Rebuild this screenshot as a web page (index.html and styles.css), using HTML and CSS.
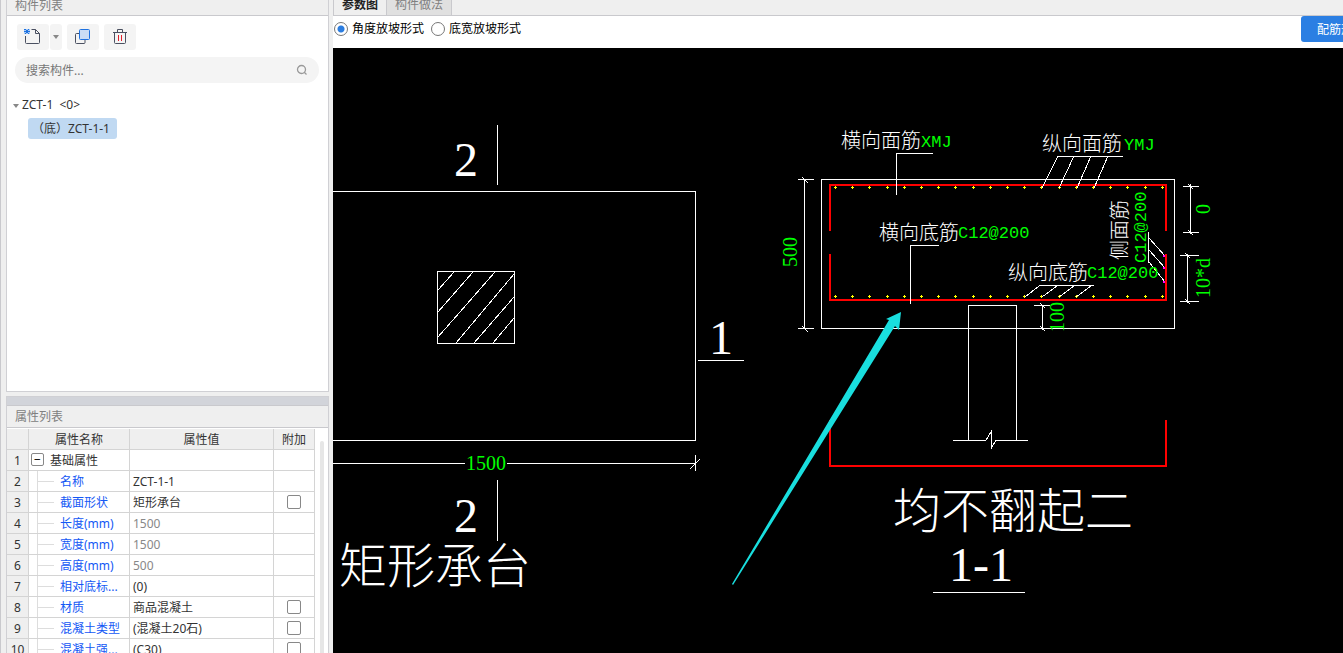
FILE: index.html
```
<!DOCTYPE html>
<html lang="zh-CN">
<head>
    <meta charset="UTF-8">
    <title>构件列表</title>
    <link rel="stylesheet" href="styles.css">
</head>
<body>
<div class="app">
    <aside class="side">
        <section class="panel list-panel">
            <h2 class="panel-title clipped">构件列表</h2>
            <div class="toolbar">
                <div class="split">
                    <button class="tool" aria-label="新建">
                        <svg width="18" height="18" viewBox="0 0 18 18" fill="none">
                            <path d="M1.500 8v6.500q0 1 1 1h12q1 0 1-1V5.500l-4-4H7.500M11.500 1.500v4h4" stroke="#4a5061"/>
                            <path d="M0 1h6v5H0z" fill="#a9cbf5"/>
                            <path d="M1 1h1v1H1zM4 1h1v1H4zM2 2h2v3H2zM0 3h2v1H0zM4 3h2v1H4zM1 5h1v1H1zM4 5h1v1H4zM0 1h1v1H0z" fill="#1f72e0"/>
                        </svg>
                    </button>
                    <button class="tool drop" aria-label="更多"><span class="caret"></span></button>
                </div>
                <button class="tool" aria-label="复制">
                    <svg width="18" height="18" viewBox="0 0 18 18" fill="none">
                        <path d="M5 5.500H2.500q-1 0-1 1v8q0 1 1 1H10q1 0 1-1V12" stroke="#4a5061"/>
                        <rect x="5.500" y="1.500" width="10" height="10" rx="1" fill="#c9dcf5" stroke="#1f72e0"/>
                    </svg>
                </button>
                <button class="tool" aria-label="删除">
                    <svg width="18" height="18" viewBox="0 0 18 18" fill="none">
                        <path d="M2 4.500h14M6.500 4V1.500h5V4M3.500 5v9.500q0 1 1 1h9q1 0 1-1V5" stroke="#4a5061"/>
                        <path d="M7.500 7v6M10.500 7v6" stroke="#e0202c"/>
                    </svg>
                </button>
            </div>
            <label class="search">
                <input type="text" placeholder="搜索构件..." aria-label="搜索构件">
                <svg width="12" height="12" viewBox="0 0 12 12" fill="none" stroke="#999" stroke-width="1.300">
                    <circle cx="5.500" cy="5.500" r="4"/>
                    <path d="M8 8l2.500 2.500"/>
                </svg>
            </label>
            <ul class="tree">
                <li><span class="caret"></span>ZCT-1&nbsp; &lt;0&gt;
                    <ul><li class="selected">（底）ZCT-1-1</li></ul>
                </li>
            </ul>
        </section>
        <section class="panel prop-panel">
            <div class="splitter"></div>
            <h2 class="panel-title">属性列表</h2>
            <div class="prop-body">
                <table class="props">
                    <thead>
                    <tr><th class="num"></th><th class="name">属性名称</th><th class="value">属性值</th><th class="extra">附加</th></tr>
                    </thead>
                    <tbody>
                    <tr class="group"><th>1</th><td><button class="fold" aria-label="折叠">−</button>基础属性</td><td></td><td></td></tr>
                    <tr><th>2</th><td>名称</td><td>ZCT-1-1</td><td></td></tr>
                    <tr><th>3</th><td>截面形状</td><td>矩形承台</td><td><input type="checkbox" aria-label="截面形状附加"></td></tr>
                    <tr class="dim"><th>4</th><td>长度(mm)</td><td>1500</td><td></td></tr>
                    <tr class="dim"><th>5</th><td>宽度(mm)</td><td>1500</td><td></td></tr>
                    <tr class="dim"><th>6</th><td>高度(mm)</td><td>500</td><td></td></tr>
                    <tr><th>7</th><td>相对底标...</td><td>(0)</td><td></td></tr>
                    <tr><th>8</th><td>材质</td><td>商品混凝土</td><td><input type="checkbox" aria-label="材质附加"></td></tr>
                    <tr><th>9</th><td>混凝土类型</td><td>(混凝土20石)</td><td><input type="checkbox" aria-label="混凝土类型附加"></td></tr>
                    <tr><th>10</th><td>混凝土强...</td><td>(C30)</td><td><input type="checkbox" aria-label="混凝土强度附加"></td></tr>
                    </tbody>
                </table>
                <div class="scrollbar"></div>
            </div>
        </section>
    </aside>
    <main class="main">
        <nav class="tabs">
            <button class="tab active">参数图</button>
            <button class="tab">构件做法</button>
        </nav>
        <div class="options">
            <label><input type="radio" name="slope" checked>角度放坡形式</label>
            <label><input type="radio" name="slope">底宽放坡形式</label>
            <button class="primary">配筋形式</button>
        </div>
        <div class="canvas">
            <svg class="drawing" viewBox="333 48 1010 605" preserveAspectRatio="xMinYMin slice">
                <!-- plan view -->
                <g class="line">
                    <path d="M333 191.500H695.500V440.500H333M497.500 125v60M497.500 480v61M698 360.500h46"/>
                    <path d="M333 463.500h132M507 463.500h189M695.500 455v16"/>
                    <rect x="437.500" y="271.500" width="77" height="72"/>
                    <path d="M438 290l16-18M438 312l35-40M438 337l57-65M456 343l58-69M474 343l40-46M493 343l21-25M690 469l10-10"/>
                </g>
                <text class="title" x="454" y="176">2</text>
                <text class="title" x="454" y="532">2</text>
                <text class="title" x="709" y="354">1</text>
                <text class="title" x="339" y="583">矩形承台</text>
                <text class="dim-text" x="466" y="470">1500</text>

                <!-- section 1-1 -->
                <g class="line">
                    <rect x="821.500" y="179.500" width="353" height="149"/>
                    <path d="M968.500 440V305.500H1016.500V440M953 440.500h33M996 440.500h32"/>
                    <path d="M986 440l5-8v17l5-9"/>
                    <path d="M798 179.500h16M798 328.500h16M804.500 179v150"/>
                    <path d="M1183 186.500h16M1183 232.500h16M1190.500 184v50M1180 255.500h19M1180 301.500h19M1187.500 254v49"/>
                    <path d="M1034 305.500h16M1042.500 305v25"/>
                    <path d="M802 177l6 6M802 326l6 6M1188 184l5 5M1188 230l5 5M1185 253l5 5M1185 299l5 5M1040 303l5 5M1040 326l5 5"/>
                    <path d="M933 592.500h92"/>
                </g>
                <g class="rebar">
                    <path d="M830 231V185H1166V231M830 254V300H1166V254M830 420V466H1166V420"/>
                </g>
                <path class="dots" d="M834 187.500H1165M834 296.500H1165"/>
                <path class="dots-tall" d="M835 187.500H1165M835 296.500H1165"/>
                <g class="line">
                    <path d="M896.500 195V153.500h36M910.500 304V245.500h28M1123 156.500h-65M1094 285.500h-55M1148.500 232v31"/>
                    <path d="M1058 156l-16 32M1074 156l-15 32M1091 156l-14 32M1108 156l-14 32M1039 286l-14 11M1057 286l-15 11M1074 286l-15 11M1091 286l-15 11M1149 238l16 18M1149 250l16 18M1149 262l16 20"/>
                </g>
                <path d="M1163 255h2v2h-2zM1163 267h2v2h-2zM1163 281h2v2h-2z" fill="#f0f"/>
                <text class="note" x="841" y="148">横向面筋</text>
                <text class="code" x="921" y="147">XMJ</text>
                <text class="note" x="1042" y="151">纵向面筋</text>
                <text class="code" x="1124" y="150">YMJ</text>
                <text class="note" x="879" y="240">横向底筋</text>
                <text class="code" x="958" y="238">C12@200</text>
                <text class="note" x="1008" y="280">纵向底筋</text>
                <text class="code" x="1087" y="278">C12@200</text>
                <text class="note" transform="translate(1127 260) rotate(-90)">侧面筋</text>
                <text class="code" transform="translate(1146 263) rotate(-90)">C12@200</text>
                <text class="dim-text" transform="translate(797 267) rotate(-90)">500</text>
                <text class="dim-text" transform="translate(1210 214) rotate(-90)">0</text>
                <text class="dim-text" transform="translate(1210 298) rotate(-90)">10*d</text>
                <text class="dim-text" transform="translate(1064 332) rotate(-90)">100</text>
                <text class="title" x="893" y="528">均不翻起二</text>
                <text class="title" x="949" y="581">1-1</text>
                <path d="M732 584L889 320L886 319L901 312L899 330L895 326L733 585z" fill="#19dede"/>
            </svg>
        </div>
    </main>
</div>
</body>
</html>
```

FILE: styles.css
```
* {
    box-sizing: border-box;
}

body {
    margin: 0;
    background: #efefef;
    color: #333;
    font: 12px/20px "Noto Sans", "Noto Sans CJK SC", sans-serif;
}

button, input {
    font: inherit;
    margin: 0;
}

button {
    border: none;
    padding: 0;
}

.app {
    display: flex;
    height: 100vh;
    overflow: hidden;
}

.side {
    display: flex;
    flex-direction: column;
    gap: 4px;
    width: 333px;
    flex: none;
    padding: 0 4px 0 5px;
    border-left: 1px solid #c9c9cd;
}

.panel {
    border: 1px solid #d0d0d4;
    overflow: hidden;
}

.list-panel {
    flex: none;
    height: 392px;
    border-top: none;
    background: #fff;
}

.panel-title {
    display: flex;
    align-items: flex-end;
    height: 22px;
    margin: 0;
    padding-left: 8px;
    border-bottom: 1px solid #c9c9cd;
    background: #efefef;
    color: #808080;
    font-size: 12px;
    font-weight: normal;
}

.panel-title.clipped {
    height: 16px;
    line-height: 18px;
}

.toolbar {
    display: flex;
    gap: 5px;
    padding: 8px 10px 7px;
}

.split {
    display: flex;
    gap: 1px;
}

.tool {
    display: flex;
    align-items: center;
    justify-content: center;
    width: 32px;
    height: 26px;
    border-radius: 3px;
    background: #f4f4f4;
}

.tool.drop {
    width: 12px;
}

.caret {
    display: inline-block;
    border: 3px solid transparent;
    border-top: 4px solid #888;
    border-bottom: none;
}

.search {
    display: flex;
    align-items: center;
    height: 26px;
    margin: 0 9px 0 8px;
    padding: 0 11px;
    border-radius: 13px;
    background: #f4f4f4;
}

.search input {
    flex: 1;
    min-width: 0;
    padding: 2px 0 0;
    border: none;
    outline: none;
    background: none;
}

.search input::placeholder {
    color: #777;
}

.tree {
    margin: 12px 0 0;
    padding: 0 6px;
    list-style: none;
}

.tree .caret {
    margin-right: 3px;
    vertical-align: middle;
}

.tree ul {
    margin-top: 3px;
    padding-left: 15px;
    list-style: none;
}

.tree .selected {
    width: fit-content;
    padding: 1px 7px 0 4px;
    border-radius: 3px;
    background: #c0d9f2;
}

.prop-panel {
    flex: 1;
    min-height: 0;
    border-bottom: none;
}

.splitter {
    height: 9px;
    border-bottom: 1px solid #c9c9cd;
    background: #d2d4da;
}

.prop-body {
    display: flex;
    padding-top: 1px;
    background: #fff;
}

.props {
    flex: none;
    width: 308px;
    table-layout: fixed;
    border-collapse: separate;
    border-spacing: 0;
}

.props th, .props td {
    height: 21px;
    padding: 2px 0 0;
    border-right: 1px solid #d4d4d4;
    border-bottom: 1px solid #d4d4d4;
    font-weight: normal;
    line-height: 18px;
    vertical-align: top;
    white-space: nowrap;
}

.props th {
    background: #efefef;
}

.props .num { width: 22px; }
.props .name { width: 101px; }
.props .value { width: 144px; }
.props .extra { width: 41px; }

.props td:nth-child(2) {
    padding-left: 31px;
    background: linear-gradient(#ddd, #ddd) 9px 10px / 16px 1px no-repeat,
                linear-gradient(#ddd, #ddd) 8px 0 / 1px 100% no-repeat;
    color: #1458f5;
}

.props td:nth-child(3) {
    padding-left: 3px;
}

.props td:nth-child(4) {
    text-align: center;
}

.props .group td:nth-child(2) {
    padding-left: 2px;
    background: none;
    color: #333;
}

.props .dim td:nth-child(3) {
    color: #888;
}

.fold {
    width: 13px;
    height: 13px;
    margin: 1px 6px 0 0;
    border: 1px solid #888;
    border-radius: 2px;
    background: #fff;
    line-height: 11px;
    vertical-align: top;
}

input[type=checkbox] {
    appearance: none;
    width: 14px;
    height: 14px;
    margin-top: 1px;
    border: 1px solid #888;
    border-radius: 2px;
    background: #fff;
    vertical-align: top;
}

.scrollbar {
    width: 4px;
    margin: 12px 0 0 5px;
    border-radius: 2px;
    background: #e6e6e6;
}

.main {
    display: flex;
    flex-direction: column;
    flex: 1;
    min-width: 0;
}

.tabs {
    display: flex;
    align-items: flex-end;
    height: 16px;
    border-bottom: 1px solid #c9c9cd;
    border-left: 1px solid #c9c9cd;
    overflow: hidden;
}

.tab {
    height: 20px;
    padding: 0 8px;
    border-right: 1px solid #c9c9cd;
    background: #e0e0e0;
    color: #808080;
    line-height: 20px;
}

.tab.active {
    background: #efefef;
    color: #222;
    font-weight: bold;
}

.options {
    display: flex;
    align-items: flex-start;
    gap: 7px;
    flex: none;
    height: 32px;
    padding-left: 1px;
    background: #fff;
    color: #000;
}

.options label {
    display: flex;
    align-items: center;
    gap: 4px;
    height: 25px;
}

input[type=radio] {
    appearance: none;
    width: 14px;
    height: 14px;
    border: 1px solid #777;
    border-radius: 50%;
    background: #fff;
}

input[type=radio]:checked {
    background: radial-gradient(#2b7de0 3px, #fff 4px);
}

.primary {
    width: 42px;
    height: 26px;
    margin-left: auto;
    padding: 1px 0 0 16px;
    border-radius: 3px 0 0 3px;
    background: #2b7fe3;
    color: #fff;
    text-align: left;
    white-space: nowrap;
    overflow: hidden;
}

.canvas {
    flex: 1;
    min-height: 0;
    background: #000;
}

.drawing {
    display: block;
    width: 100%;
    height: 100%;
}

.line path, .line rect {
    fill: none;
    stroke: #fff;
    shape-rendering: crispEdges;
}

.rebar path {
    fill: none;
    stroke: #f00;
    stroke-width: 2px;
    shape-rendering: crispEdges;
}

/* bar ends: a 3px cross every 17px */
.dots, .dots-tall {
    stroke: #ff0;
    shape-rendering: crispEdges;
}

.dots {
    stroke-dasharray: 3 14.2;
}

.dots-tall {
    stroke-width: 3px;
    stroke-dasharray: 1 16.2;
}

.drawing text {
    fill: #fff;
    font-family: "Liberation Serif", "Noto Sans CJK SC", serif;
    font-weight: 300;
}

.drawing .title {
    font-size: 48px;
}

.drawing .note {
    font-size: 20px;
}

.drawing .dim-text {
    fill: #0f0;
    font-size: 20px;
}

.drawing .code {
    fill: #0f0;
    font-family: "Liberation Mono", monospace;
    font-size: 17px;
}
```
